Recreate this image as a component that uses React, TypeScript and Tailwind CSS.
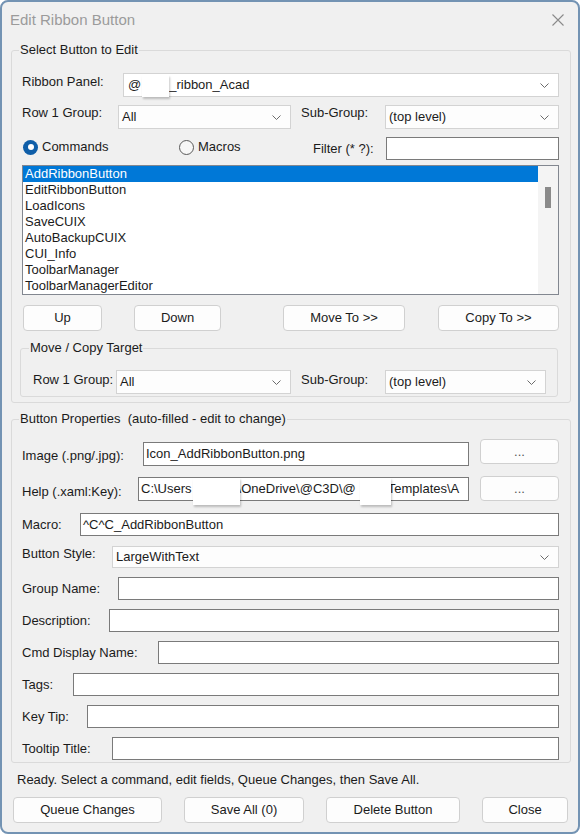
import React from "react";

const FONT = "font-['Liberation_Sans',Arial,sans-serif]";

const COMMANDS = [
  "AddRibbonButton",
  "EditRibbonButton",
  "LoadIcons",
  "SaveCUIX",
  "AutoBackupCUIX",
  "CUI_Info",
  "ToolbarManager",
  "ToolbarManagerEditor",
];

function Chevron() {
  return (
    <svg width="9" height="5" viewBox="0 0 9 5" className="shrink-0">
      <path d="M0.5 0.5 L4.5 4.5 L8.5 0.5" fill="none" stroke="#6b6b6b" strokeWidth="1" />
    </svg>
  );
}

function Combo({ value, className = "" }: { value: React.ReactNode; className?: string }) {
  return (
    <div
      className={`relative flex min-w-0 items-center justify-between border border-[#d3d3d3] bg-[#fdfdfd] pl-[3px] pr-[9px] whitespace-nowrap ${className}`}
    >
      <span className="flex items-center">{value}</span>
      <Chevron />
    </div>
  );
}

function TextBox({ children, className = "" }: { children?: React.ReactNode; className?: string }) {
  return (
    <div
      className={`relative flex min-w-0 items-center overflow-hidden whitespace-nowrap border border-[#7a7a7a] bg-white pl-[2px] ${className}`}
    >
      {children}
    </div>
  );
}

function Btn({ label, className = "" }: { label: string; className?: string }) {
  return (
    <button
      className={`flex shrink-0 items-center justify-center rounded-[4px] border border-[#d0d0d0] bg-[#fdfdfd] text-[13px] text-[#1b1b1b] ${className}`}
    >
      {label}
    </button>
  );
}

// white patches laid over parts of the text
function Patch({ className }: { className: string }) {
  return <div className={`absolute bg-white shadow-[1px_2px_2px_rgba(0,0,0,0.22)] ${className}`} />;
}

function Radio({ checked }: { checked?: boolean }) {
  if (checked) {
    return (
      <span className="flex h-[15px] w-[15px] shrink-0 items-center justify-center rounded-full bg-[#0f5ea8]">
        <span className="h-[6px] w-[6px] rounded-full bg-white" />
      </span>
    );
  }
  return <span className="h-[15px] w-[15px] shrink-0 rounded-full border border-[#5a5a5a] bg-[#f7f7f7]" />;
}

function PropRow({
  label,
  labelW,
  className = "",
  children,
}: {
  label: string;
  labelW: string;
  className?: string;
  children: React.ReactNode;
}) {
  return (
    <div className={`flex items-center ${className}`}>
      <span className={`shrink-0 ${labelW}`}>{label}</span>
      {children}
    </div>
  );
}

export default function App() {
  return (
    <div
      className={`${FONT} flex h-[834px] w-[580px] flex-col overflow-hidden rounded-[8px] border-2 border-[#7393b3] bg-[#f0f0f0] text-[13px] leading-[16px] text-[#1b1b1b]`}
    >
      {/* title bar */}
      <div className="flex h-[36px] shrink-0 items-center justify-between pl-[8px] pr-[14px]">
        <span className="text-[15px] text-[#9b9b9b]">Edit Ribbon Button</span>
        <svg width="12" height="12" viewBox="0 0 12 12">
          <path d="M0.5 0.5 L11.5 11.5 M11.5 0.5 L0.5 11.5" stroke="#8a8a8a" strokeWidth="1.1" />
        </svg>
      </div>

      {/* Select Button to Edit */}
      <fieldset className="ml-[9px] mt-[4px] w-[560px] min-w-0 rounded-[3px] border border-[#dadada] pb-[5px] pl-[10px] pr-[11px] pt-[15px]">
        <legend className="-ml-[3px] px-[1px] leading-[16px]">Select Button to Edit</legend>

        <div className="flex h-[24px] items-center">
          <span className="mb-[6px] w-[101px] shrink-0">Ribbon Panel:</span>
          <div className="relative h-[24px] flex-1">
            <Combo
              value={
                <>
                  <span className="pl-[1px]">@</span>
                  <span className="inline-block w-[28px]" />
                  <span>_ribbon_Acad</span>
                </>
              }
              className="h-[24px] w-full bg-white"
            />
            <Patch className="left-[19px] top-[2px] h-[22px] w-[27px]" />
          </div>
        </div>

        <div className="mt-[8px] flex h-[24px] items-center">
          <span className="mb-[8px] w-[96px] shrink-0">Row 1 Group:</span>
          <Combo value="All" className="h-[24px] w-[173px]" />
          <span className="mb-[8px] ml-[10px] w-[84px] shrink-0">Sub-Group:</span>
          <Combo value="(top level)" className="h-[24px] flex-1" />
        </div>

        <div className="mt-[8px] flex h-[23px] items-center">
          <div className="mb-[3px] ml-[1px] flex w-[156px] items-center gap-[4px]">
            <Radio checked />
            <span>Commands</span>
          </div>
          <div className="mb-[3px] flex w-[134px] items-center gap-[4px]">
            <Radio />
            <span>Macros</span>
          </div>
          <span className="w-[73px] shrink-0">Filter (* ?):</span>
          <TextBox className="h-[23px] flex-1" />
        </div>

        {/* command list */}
        <div className="mt-[5px] flex h-[130px] border border-[#828790] bg-white">
          <div className="w-[515px] shrink-0">
            {COMMANDS.map((c, i) => (
              <div
                key={c}
                className={`h-[16px] pl-[2px] leading-[16px] ${i === 0 ? "bg-[#0078d7] text-white" : ""}`}
              >
                {c}
              </div>
            ))}
          </div>
          <div className="flex-1 bg-[#f4f4f4] pl-[7px] pt-[21px]">
            <div className="h-[21px] w-[6px] bg-[#8a8a8a]" />
          </div>
        </div>

        <div className="mt-[10px] flex h-[26px]">
          <Btn label="Up" className="ml-[1px] h-[26px] w-[79px]" />
          <Btn label="Down" className="ml-[32px] h-[26px] w-[87px]" />
          <Btn label="Move To >>" className="ml-[62px] h-[26px] w-[122px]" />
          <Btn label="Copy To >>" className="ml-[33px] h-[26px] w-[121px]" />
        </div>

        {/* Move / Copy Target */}
        <fieldset className="-ml-[2px] mt-[9px] w-[538px] min-w-0 rounded-[3px] border border-[#dadada] pb-[2px] pl-[12px] pr-[11px] pt-[14px]">
          <legend className="-ml-[4px] px-[1px] leading-[16px]">Move / Copy Target</legend>
          <div className="flex h-[24px] items-center">
            <span className="mb-[4px] w-[83px] shrink-0">Row 1 Group:</span>
            <Combo value="All" className="h-[24px] w-[175px]" />
            <span className="mb-[4px] ml-[10px] w-[84px] shrink-0">Sub-Group:</span>
            <Combo value="(top level)" className="h-[24px] flex-1" />
          </div>
        </fieldset>
      </fieldset>

      {/* Button Properties */}
      <fieldset className="ml-[9px] mt-[8px] w-[560px] min-w-0 rounded-[3px] border border-[#dadada] pb-[2px] pl-[10px] pr-[11px] pt-[12px]">
        <legend className="-ml-[3px] px-[1px] leading-[16px] whitespace-pre">
          {"Button Properties  (auto-filled - edit to change)"}
        </legend>

        <div className="flex h-[27px] items-start">
          <span className="mt-[9px] w-[121px] shrink-0">Image (.png/.jpg):</span>
          <TextBox className="mt-[3px] h-[24px] flex-1">Icon_AddRibbonButton.png</TextBox>
          <Btn label="..." className="ml-[11px] h-[25px] w-[79px] text-[#555]" />
        </div>

        <div className="mt-[10px] flex h-[25px] items-start">
          <span className="mt-[8px] w-[116px] shrink-0">Help (.xaml:Key):</span>
          <div className="relative mt-[1px] h-[24px] min-w-0 flex-1">
            <TextBox className="h-[24px] w-full">
              <span>C:\Users</span>
              <span className="inline-block w-[46px] shrink-0" />
              <span>\OneDrive\@C3D\@</span>
              <span className="inline-block w-[32px] shrink-0" />
              <span>Templates\A</span>
            </TextBox>
            <Patch className="left-[55px] top-[1px] h-[27px] w-[47px]" />
            <Patch className="left-[222px] top-[1px] h-[27px] w-[31px]" />
          </div>
          <Btn label="..." className="ml-[11px] h-[25px] w-[79px] text-[#555]" />
        </div>

        <PropRow label="Macro:" labelW="w-[58px]" className="mt-[12px] h-[23px]">
          <TextBox className="h-[23px] flex-1">^C^C_AddRibbonButton</TextBox>
        </PropRow>

        <div className="mt-[10px] flex h-[22px] items-center">
          <span className="mb-[6px] w-[90px] shrink-0">Button Style:</span>
          <Combo value="LargeWithText" className="h-[22px] flex-1" />
        </div>

        <PropRow label="Group Name:" labelW="w-[96px]" className="mt-[9px] h-[23px]">
          <TextBox className="h-[23px] flex-1" />
        </PropRow>
        <PropRow label="Description:" labelW="w-[87px]" className="mt-[9px] h-[23px]">
          <TextBox className="h-[23px] flex-1" />
        </PropRow>
        <PropRow label="Cmd Display Name:" labelW="w-[136px]" className="mt-[9px] h-[23px]">
          <TextBox className="h-[23px] flex-1" />
        </PropRow>
        <PropRow label="Tags:" labelW="w-[51px]" className="mt-[9px] h-[23px]">
          <TextBox className="h-[23px] flex-1" />
        </PropRow>
        <PropRow label="Key Tip:" labelW="w-[65px]" className="mt-[9px] h-[23px]">
          <TextBox className="h-[23px] flex-1" />
        </PropRow>
        <PropRow label="Tooltip Title:" labelW="w-[90px]" className="mt-[9px] h-[23px]">
          <TextBox className="h-[23px] flex-1" />
        </PropRow>
      </fieldset>

      <div className="mt-[9px] pl-[15px] leading-[16px]">
        Ready. Select a command, edit fields, Queue Changes, then Save All.
      </div>

      <div className="mt-[9px] flex pl-[11px]">
        <Btn label="Queue Changes" className="h-[26px] w-[149px]" />
        <Btn label="Save All (0)" className="ml-[22px] h-[26px] w-[120px] border-[#2d6790]" />
        <Btn label="Delete Button" className="ml-[22px] h-[26px] w-[134px]" />
        <Btn label="Close" className="ml-[22px] h-[26px] w-[86px]" />
      </div>
    </div>
  );
}
